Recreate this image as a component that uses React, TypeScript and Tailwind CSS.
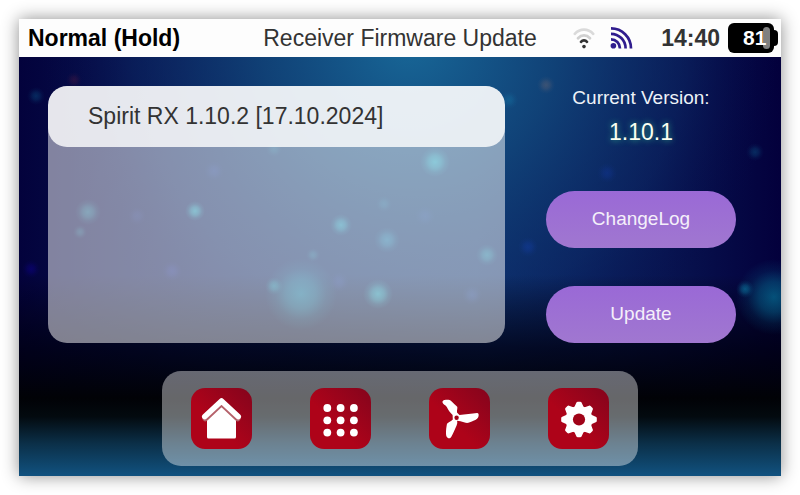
import React from 'react';

interface Glow {
    x: number;
    y: number;
    r: number;
    color: string;
    opacity: number;
}

interface DockItem {
    label: string;
    icon: React.ReactNode;
}

const GLOWS: Glow[] = [
    { x: 282, y: 275, r: 36, color: '#0aa5c4', opacity: 0.5 },
    { x: 255, y: 267, r: 9, color: '#0fb5c8', opacity: 0.4 },
    { x: 359, y: 275, r: 15, color: '#1fd0dc', opacity: 0.55 },
    { x: 416, y: 143, r: 15, color: '#1fd0e0', opacity: 0.55 },
    { x: 176, y: 192, r: 10, color: '#1fd0dc', opacity: 0.55 },
    { x: 69, y: 193, r: 13, color: '#1fb0c0', opacity: 0.4 },
    { x: 61, y: 213, r: 7, color: '#1fb0c0', opacity: 0.25 },
    { x: 322, y: 206, r: 11, color: '#1fc8dc', opacity: 0.5 },
    { x: 368, y: 221, r: 13, color: '#1fb0d8', opacity: 0.4 },
    { x: 468, y: 236, r: 11, color: '#1fc0d0', opacity: 0.4 },
    { x: 365, y: 185, r: 8, color: '#1fa8d0', opacity: 0.2 },
    { x: 294, y: 236, r: 7, color: '#1fb0c8', opacity: 0.25 },
    { x: 255, y: 130, r: 8, color: '#1fb0c8', opacity: 0.2 },
    { x: 195, y: 152, r: 10, color: '#2a50d0', opacity: 0.2 },
    { x: 118, y: 197, r: 9, color: '#2a50d0', opacity: 0.15 },
    { x: 153, y: 252, r: 10, color: '#2a40e0', opacity: 0.2 },
    { x: 320, y: 263, r: 10, color: '#2a50d0', opacity: 0.2 },
    { x: 453, y: 276, r: 10, color: '#2a60e0', opacity: 0.2 },
    { x: 406, y: 197, r: 10, color: '#2a60e0', opacity: 0.15 },
    { x: 17, y: 77, r: 9, color: '#0a6090', opacity: 0.4 },
    { x: 55, y: 61, r: 8, color: '#702040', opacity: 0.3 },
    { x: 12, y: 250, r: 9, color: '#1000a0', opacity: 0.4 },
    { x: 527, y: 66, r: 9, color: '#7a6a70', opacity: 0.4 },
    { x: 490, y: 81, r: 9, color: '#1580b0', opacity: 0.35 },
    { x: 509, y: 228, r: 10, color: '#1440b0', opacity: 0.4 },
    { x: 588, y: 154, r: 10, color: '#1238a0', opacity: 0.4 },
    { x: 736, y: 133, r: 9, color: '#0a5080', opacity: 0.5 },
    { x: 726, y: 270, r: 9, color: '#0a80a8', opacity: 0.6 },
    { x: 755, y: 278, r: 38, color: '#067ba0', opacity: 0.65 },
];

const Backdrop: React.FC = () => (
    <svg
        className="absolute inset-0 w-full h-full"
        viewBox="0 0 762 457"
        preserveAspectRatio="none"
        aria-hidden="true"
    >
        <defs>
            <linearGradient id="base" x1="0" y1="0" x2="1" y2="0">
                <stop offset="0" stopColor="#03023c" />
                <stop offset="0.25" stopColor="#0a1c58" />
                <stop offset="0.6" stopColor="#0d3270" />
                <stop offset="0.85" stopColor="#081450" />
                <stop offset="1" stopColor="#03003c" />
            </linearGradient>
            <radialGradient id="beam" gradientUnits="userSpaceOnUse" cx="390" cy="20" r="370">
                <stop offset="0" stopColor="#186898" />
                <stop offset="0.4" stopColor="#11467a" stopOpacity="0.85" />
                <stop offset="0.75" stopColor="#0c2a66" stopOpacity="0.45" />
                <stop offset="1" stopColor="#05084a" stopOpacity="0" />
            </radialGradient>
            <linearGradient id="floor" x1="0" y1="0" x2="0" y2="1">
                <stop offset="0.56" stopColor="#000008" stopOpacity="0" />
                <stop offset="0.72" stopColor="#000010" stopOpacity="0.75" />
                <stop offset="0.83" stopColor="#010206" />
                <stop offset="0.87" stopColor="#030a0f" />
                <stop offset="0.93" stopColor="#0b3049" />
                <stop offset="1" stopColor="#115280" />
            </linearGradient>
            {GLOWS.map((glow, i) => (
                <radialGradient key={i} id={`glow-${i}`}>
                    <stop offset="0" stopColor={glow.color} stopOpacity={glow.opacity} />
                    <stop offset="0.4" stopColor={glow.color} stopOpacity={glow.opacity * 0.65} />
                    <stop offset="0.7" stopColor={glow.color} stopOpacity={glow.opacity * 0.22} />
                    <stop offset="1" stopColor={glow.color} stopOpacity="0" />
                </radialGradient>
            ))}
        </defs>
        <rect width="762" height="457" fill="url(#base)" />
        <rect width="762" height="457" fill="url(#beam)" />
        <rect width="762" height="457" fill="url(#floor)" />
        {GLOWS.map((glow, i) => (
            <circle key={i} cx={glow.x} cy={glow.y} r={glow.r} fill={`url(#glow-${i})`} />
        ))}
    </svg>
);

const WifiIcon: React.FC = () => (
    <svg width="22" height="22" viewBox="0 0 22 22" fill="none" strokeWidth="2.7" strokeLinecap="round" role="img" aria-label="Wi-Fi">
        <path d="M1.8 6.8C7 1.2 15 1.2 20.2 6.8" stroke="#dadada" />
        <path d="M5 11.2C8.6 7.4 13.4 7.4 17 11.2" stroke="#d0d0d0" />
        <path d="M8 14.8C9.6 13 12.4 13 14 14.8" stroke="#333" />
        <circle cx="11" cy="19.6" r="1.8" fill="#333" />
    </svg>
);

const TelemetryIcon: React.FC = () => (
    <svg width="23" height="22" viewBox="0 0 23 22" fill="none" stroke="#301d8e" strokeWidth="2.7" role="img" aria-label="Telemetry">
        <path d="M1 1.4A20 20 0 0 1 21 21.4" />
        <path d="M1 6.8A14.6 14.6 0 0 1 15.6 21.4" />
        <path d="M1 12.4A9 9 0 0 1 10 21.4" />
        <circle cx="3.4" cy="18.8" r="2.8" fill="#301d8e" stroke="none" />
    </svg>
);

const Battery: React.FC<{ level: number }> = ({ level }) => (
    <div className="flex items-center" role="img" aria-label={`Battery ${level}%`}>
        <div className="relative flex h-[30px] w-[46px] items-center rounded-md bg-black pl-[15px]">
            <div className="absolute top-1 right-1 h-[22px] w-[7px] rounded-sm bg-[#808080]" />
            <span className="relative text-[21px] leading-6 font-bold text-white">{level}</span>
        </div>
        <div className="h-4 w-1 rounded-r-sm bg-black" />
    </div>
);

const DOCK: DockItem[] = [
    {
        label: 'Home',
        icon: (
            <>
                <path d="M16 30 30.5 16.5 45 30V49a1.5 1.5 0 0 1-1.5 1.5h-26A1.5 1.5 0 0 1 16 49Z" fill="#fff" />
                <path d="M14.5 30 30.5 15 46.5 30" fill="none" stroke="#b5616a" strokeWidth="6.4" strokeLinecap="round" strokeLinejoin="round" />
                <path d="M13.8 28.5 30.5 13 47.2 28.5" fill="none" stroke="#fff" strokeWidth="5.6" strokeLinecap="round" strokeLinejoin="round" />
            </>
        ),
    },
    {
        label: 'Menu',
        icon: [20, 32.3, 44.6].map(y =>
            [17.3, 30.6, 43.9].map(x => <circle key={`${x}-${y}`} cx={x} cy={y} r="3.9" fill="#fff" />)
        ),
    },
    {
        label: 'Model',
        icon: (
            <>
                <path
                    d="M13.5 14.6C13.2 12.6 14.6 11.8 17 11.8C19.4 11.6 21.2 12 22.4 13.2C24.6 15.4 26.6 17 28.2 18.8C28.8 20 27.8 21.6 28 24.4L30.5 27C36 26.6 43 25.4 48 25C49.8 25 50 26.8 49.4 28.8C48.4 31.6 45.6 32.6 39.4 34.8C37 35.4 34 33.6 31.5 33.2L28 32.8C28.6 34.4 28.2 36 27.6 37.6C25.6 42 24 46 22.2 49C21 51 18.4 50.4 17.4 48.2C16.6 45.4 17.2 39.6 18 35.8C19.2 33.8 22.2 33.4 23.8 31.4L23.6 27C20.8 24.4 19.4 22 17.8 19C16.2 17 14.2 16.4 13.5 14.6Z"
                    fill="#fff"
                />
                <circle cx="27.6" cy="29.8" r="2.2" fill="#a00318" />
            </>
        ),
    },
    {
        label: 'Settings',
        icon: (
            <>
                <circle cx="31" cy="31.5" r="13.5" fill="#fff" />
                {[0, 45, 90, 135, 180, 225, 270, 315].map(angle => (
                    <path
                        key={angle}
                        d="M25.8 20.2 28 15.4Q28.4 13.7 29.6 13.7H32.4Q33.6 13.7 34 15.4L36.2 20.2Z"
                        fill="#fff"
                        transform={`rotate(${angle} 31 31.5)`}
                    />
                ))}
                <circle cx="31" cy="31.5" r="6.1" fill="#a00318" />
            </>
        ),
    },
];

const StatusBar: React.FC = () => (
    <header className="relative grid h-[38px] grid-cols-[1fr_auto_1fr] items-center bg-[#fdfdfd] px-[3px] text-[23px] leading-7 text-[#333]">
        <span className="pl-[6px] font-bold text-black">Normal (Hold)</span>
        <h1>Receiver Firmware Update</h1>
        <div className="flex items-center justify-end">
            <WifiIcon />
            <div className="mr-7 ml-[15px]">
                <TelemetryIcon />
            </div>
            <time className="mr-2 font-bold">14:40</time>
            <Battery level={81} />
        </div>
    </header>
);

const PillButton: React.FC<{ children: React.ReactNode }> = ({ children }) => (
    <button
        type="button"
        className="h-[57px] w-full cursor-pointer rounded-full bg-linear-to-b from-[#9a69d6] to-[#a077d0] text-[19px] text-[#f4effa]"
    >
        {children}
    </button>
);

const App: React.FC = () => {
    return (
        <div className="min-h-screen bg-white p-[19px] font-['Liberation_Sans',sans-serif]">
            <div className="relative shadow-[0_0_16px_rgba(0,0,0,0.45)]">
                <Backdrop />
                <StatusBar />

                <main className="relative flex gap-[41px] pt-[29px] pr-[45px] pl-[29px]">
                    {/* Available firmware */}
                    <ul className="h-[257px] flex-1 overflow-hidden rounded-[19px] bg-white/50">
                        <li>
                            <button
                                type="button"
                                className="h-[61px] w-full cursor-pointer rounded-[19px] bg-white/80 px-10 text-left text-[23px] text-[#333]"
                            >
                                Spirit RX 1.10.2 [17.10.2024]
                            </button>
                        </li>
                    </ul>

                    {/* Installed version and actions */}
                    <section className="flex w-[190px] flex-col justify-between">
                        <div className="text-center text-[#eef2f8]">
                            <p className="text-[19px] leading-6">Current Version:</p>
                            <p className="mt-2 text-[23px] leading-7 text-[#fbfff0] [text-shadow:0_0_6px_#2fae8c]">1.10.1</p>
                        </div>
                        <div className="flex flex-col gap-[38px]">
                            <PillButton>ChangeLog</PillButton>
                            <PillButton>Update</PillButton>
                        </div>
                    </section>
                </main>

                <div className="relative pt-7 pb-[10px]">
                    <nav className="mx-auto flex h-[95px] max-w-[476px] items-center justify-between rounded-[19px] bg-white/40 px-[29px]">
                        {DOCK.map(item => (
                            <button
                                key={item.label}
                                type="button"
                                aria-label={item.label}
                                className="cursor-pointer overflow-hidden rounded-[14px] bg-linear-to-tr from-[#ae0319] from-40% to-[#84041c]"
                            >
                                <svg width="61" height="61" viewBox="0 0 61 61">
                                    {item.icon}
                                </svg>
                            </button>
                        ))}
                    </nav>
                </div>
            </div>
        </div>
    );
};

export default App;
